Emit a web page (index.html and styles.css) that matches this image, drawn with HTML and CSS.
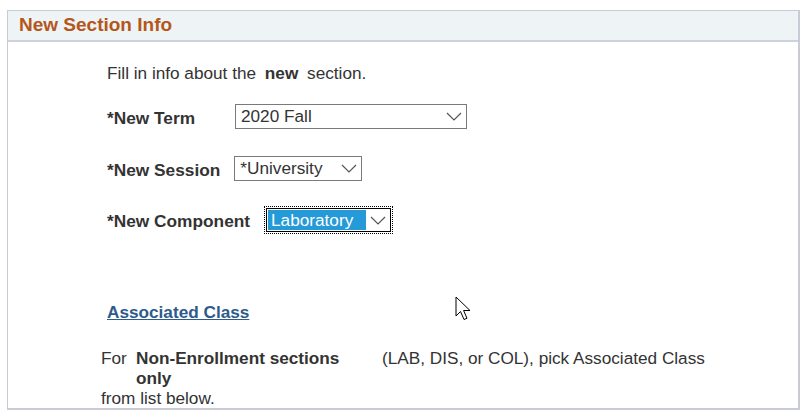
FILE: index.html
```html
<!DOCTYPE html>
<html>
<head>
<meta charset="utf-8">
<link rel="stylesheet" href="styles.css">
</head>
<body>
<div class="panel">
  <div class="panel-head">New Section Info</div>
  <div class="panel-body">
    <p class="intro">Fill in info about the <b>new</b> section.</p>
    <div class="field field-term">
      <span class="label label-term">*New Term</span>
      <div class="select select-term"><span class="val">2020 Fall</span><svg class="chev" width="16" height="9" viewBox="0 0 16 9"><path d="M1 1 L8 8 L15 1" fill="none" stroke="#555" stroke-width="1.2"/></svg></div>
    </div>
    <div class="field field-session">
      <span class="label">*New Session</span>
      <div class="select select-session"><span class="val">*University</span><svg class="chev" width="16" height="9" viewBox="0 0 16 9"><path d="M1 1 L8 8 L15 1" fill="none" stroke="#555" stroke-width="1.2"/></svg></div>
    </div>
    <div class="field field-comp">
      <span class="label">*New Component</span>
      <div class="focus-ring"><div class="select select-comp"><span class="val sel">Laboratory</span><svg class="chev" width="16" height="9" viewBox="0 0 16 9"><path d="M1 1 L8 8 L15 1" fill="none" stroke="#555" stroke-width="1.2"/></svg></div></div>
    </div>
    <a class="assoc" href="#">Associated Class</a>
    <div class="note">
      <div class="note-row">
        <span class="for">For</span>
        <b class="noen">Non-Enrollment sections only</b>
        <span class="rest">(LAB, DIS, or COL), pick Associated Class</span>
      </div>
      <div class="note-last">from list below.</div>
    </div>
  </div>
  <svg class="cursor" width="17" height="26" viewBox="0 0 17 26"><path d="M1 1 L1 20 L5.5 15.5 L9 23.5 L12 22.3 L8.6 14.5 L15 14.5 Z" fill="#fff" stroke="#000" stroke-width="1" stroke-linejoin="miter"/></svg>
</div>
</body>
</html>
```
FILE: styles.css
```css
html, body {
  margin: 0;
  padding: 0;
  background: #fff;
}
body {
  font-family: "Liberation Sans", Arial, sans-serif;
  color: #333;
  width: 811px;
  height: 419px;
  overflow: hidden;
}
.panel {
  position: relative;
  margin: 10px 0 0 7px;
  width: 790px;
  height: 397px;
  border: 1px solid #c9ccd6;
  border-right-width: 2px;
  border-bottom-width: 2px;
}
.panel-head {
  height: 29px;
  background: #eef4f6;
  border-bottom: 2px solid #cdd1da;
  color: #b5561b;
  font-weight: bold;
  font-size: 19px;
  line-height: 28px;
  padding-left: 11px;
}
.panel-body {
  padding-left: 99px;
  padding-top: 22px;
}
.intro {
  margin: 0;
  font-size: 17.2px;
  line-height: 19px;
}
.intro b {
  margin: 0 4px;
}
.field {
  display: flex;
  align-items: center;
  gap: 14px;
}
.field-term { margin-top: 21px; }
.field-session { margin-top: 27px; }
.field-comp { margin-top: 25px; }
.label {
  font-weight: bold;
  font-size: 17.3px;
  padding-top: 3px;
}
.label-term {
  min-width: 114px;
}
.select {
  box-sizing: border-box;
  display: flex;
  align-items: center;
  justify-content: space-between;
  border: 1px solid #7a7a7a;
  background: #fff;
  font-size: 17.2px;
  color: #333;
  height: 25px;
  padding: 0 4px 0 5px;
}
.select-term { width: 232px; }
.select-session { width: 128px; }
.focus-ring {
  border: 1px dotted #000;
  padding: 1px;
}
.select-comp {
  width: 125px;
  height: 24px;
  border: 1px solid #000;
  padding: 0 4px 0 1px;
}
.val.sel {
  background: #259ad8;
  color: #fff;
  width: 95px;
  padding-left: 3px;
  line-height: 20px;
}
.chev {
  display: block;
}
.assoc {
  display: inline-block;
  margin-top: 68px;
  color: #2d5b8b;
  font-weight: bold;
  font-size: 17.2px;
  text-decoration: underline;
}
.note {
  margin-left: -6px;
  margin-top: 25px;
  font-size: 17.2px;
  line-height: 20px;
}
.note-row {
  display: flex;
  align-items: flex-start;
}
.for {
  width: 35px;
}
.noen {
  width: 215px;
  margin-right: 31px;
}
.cursor {
  position: absolute;
  left: 447px;
  top: 285px;
}
```
